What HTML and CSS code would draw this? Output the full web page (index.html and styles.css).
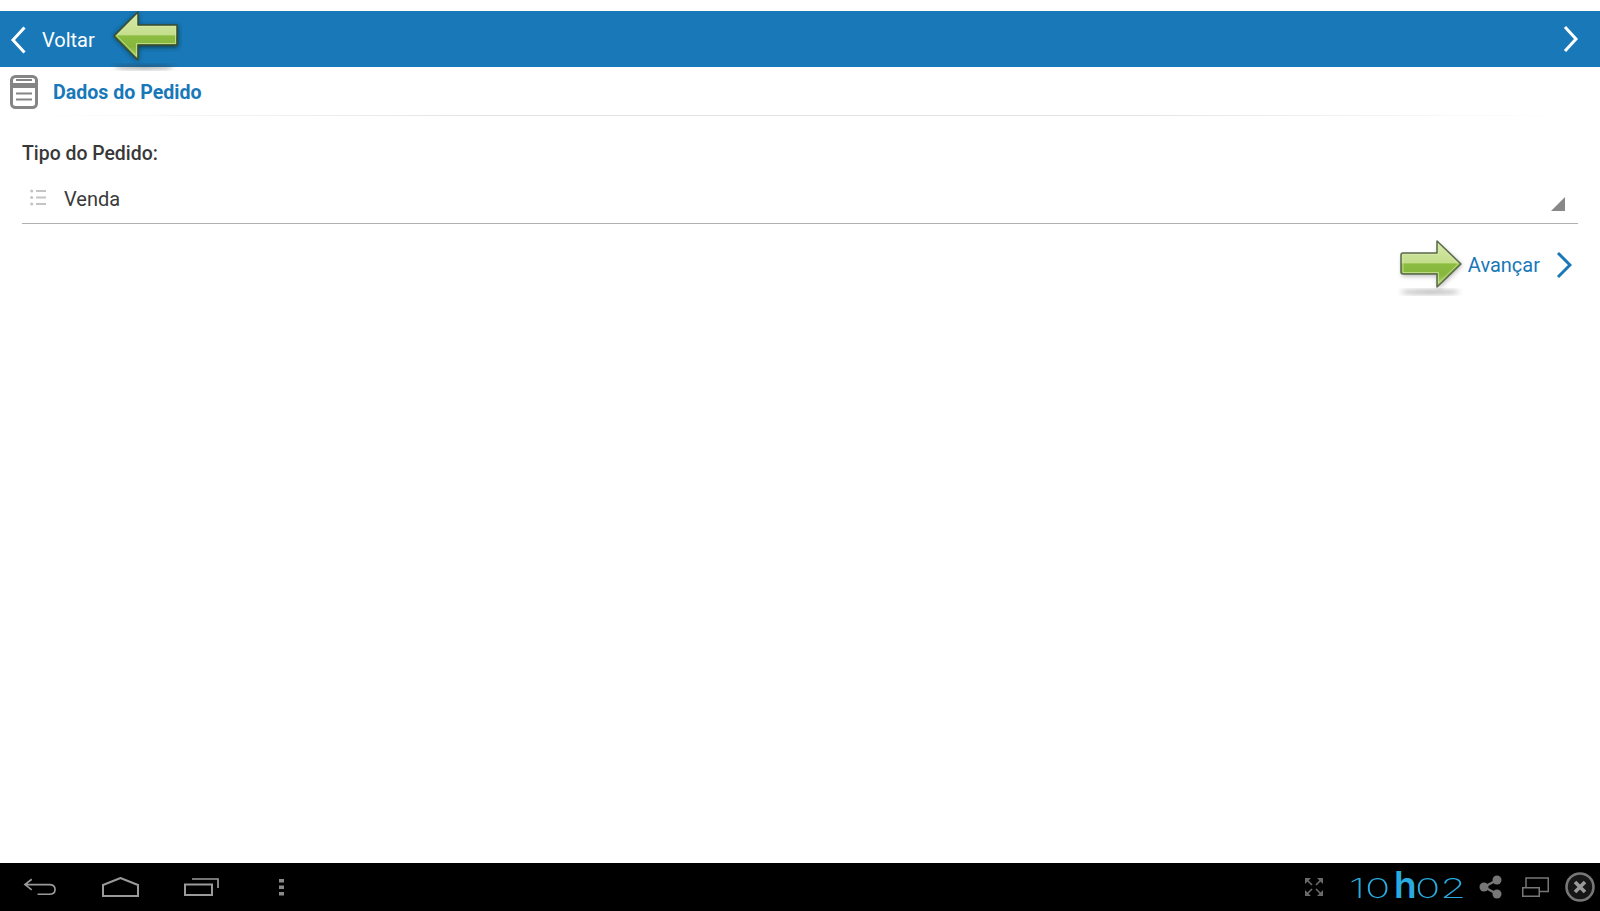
FILE: index.html
```html
<!DOCTYPE html>
<html lang="pt">

<head>
    <meta charset="UTF-8">
    <title>Dados do Pedido</title>
    <link rel="stylesheet" href="styles.css">
</head>

<body>

    <header class="topbar">
        <a class="topbar-back">
            <svg width="16" height="28" viewBox="0 0 16 28">
                <path d="M14.5 1.5 L3 14 L14.5 26.5" fill="none" stroke="#fff" stroke-width="3" />
            </svg>
            <span>Voltar</span>
        </a>
        <svg width="16" height="28" viewBox="0 0 16 28">
            <path d="M2 2 L13 14 L2 26" fill="none" stroke="#fff" stroke-width="3" />
        </svg>

        <!-- green arrow on top of the bar -->
        <svg class="hint hint-back" width="74" height="60" viewBox="0 0 74 60">
            <defs>
                <linearGradient id="green1" gradientUnits="userSpaceOnUse" x1="0" y1="1" x2="0" y2="49">
                    <stop offset="0" stop-color="#d8e9ab" />
                    <stop offset="0.47" stop-color="#c4de8c" />
                    <stop offset="0.5" stop-color="#8cbc40" />
                    <stop offset="0.72" stop-color="#86b63c" />
                    <stop offset="1" stop-color="#b4d474" />
                </linearGradient>
                <filter id="blur1" x="-30%" y="-30%" width="160%" height="160%">
                    <feGaussianBlur stdDeviation="2.5" />
                </filter>
            </defs>
            <ellipse cx="36" cy="56" rx="30" ry="2" fill="#333" opacity="0.5" filter="url(#blur1)" />
            <path d="M6 25 L30 2 L30 15 L70 15 L70 36 L30 36 L30 50 Z" fill="#0b2b28" opacity="0.8" filter="url(#blur1)" />
            <path d="M6 25 L30 1 L30 14 L69 14 L69 34 L30 34 L30 49 Z" fill="url(#green1)" stroke="#3c4d2c" stroke-width="1.5" stroke-linejoin="round" />
            <path d="M9 25 L28.5 5 L28.5 15.5 L67.5 15.5 L67.5 32.5 L28.5 32.5 L28.5 45 Z" fill="none" stroke="#d6e8a8" stroke-width="1" opacity="0.7" />
        </svg>
    </header>

    <div class="section-head">
        <svg width="28" height="34" viewBox="0 0 28 34">
            <rect x="1.5" y="1.5" width="25" height="31" rx="4" fill="#fff" stroke="#858585" stroke-width="3" />
            <rect x="3" y="8" width="22" height="5" fill="#858585" />
            <path d="M6 5 H22 M6 18.5 H22 M6 24.5 H22" stroke="#858585" stroke-width="2" />
        </svg>
        <h2>Dados do Pedido</h2>
    </div>

    <main class="content">
        <label class="field-label">Tipo do Pedido:</label>
        <div class="select">
            <svg class="list-icon" width="16" height="17" viewBox="0 0 16 17">
                <path d="M6 2 H16 M6 8.500 H16 M6 15 H16" stroke="#c4c4c4" stroke-width="2.2" />
                <circle cx="1.700" cy="2" r="1.600" fill="#c4c4c4" />
                <circle cx="1.700" cy="8.500" r="1.600" fill="#c4c4c4" />
                <circle cx="1.700" cy="15" r="1.600" fill="#c4c4c4" />
            </svg>
            <span class="select-value">Venda</span>
            <span class="select-arrow"></span>
        </div>
        <div class="actions">
            <a class="next">
                <span>Avançar</span>
                <svg width="16" height="28" viewBox="0 0 16 28">
                    <path d="M2 2 L14 14 L2 26" fill="none" stroke="#1878b8" stroke-width="3" />
                </svg>
                <svg class="hint hint-next" width="70" height="60" viewBox="0 0 70 60">
                    <defs>
                        <linearGradient id="green2" gradientUnits="userSpaceOnUse" x1="0" y1="2" x2="0" y2="48">
                            <stop offset="0" stop-color="#d8e9ab" />
                            <stop offset="0.47" stop-color="#c4de8c" />
                            <stop offset="0.5" stop-color="#8cbc40" />
                            <stop offset="0.72" stop-color="#86b63c" />
                            <stop offset="1" stop-color="#b4d474" />
                        </linearGradient>
                        <filter id="blur2" x="-30%" y="-30%" width="160%" height="160%">
                            <feGaussianBlur stdDeviation="2.5" />
                        </filter>
                    </defs>
                    <ellipse cx="32" cy="53" rx="30" ry="2" fill="#555" opacity="0.5" filter="url(#blur2)" />
                    <path d="M4 17 H40 V5 L64 26 L40 50 V37 H4 Z" fill="#555" opacity="0.45" filter="url(#blur2)" />
                    <path d="M3 16 Q3 14 5 14 H39 V2 L63 25 L39 48 V35 H5 Q3 35 3 33 Z" fill="url(#green2)" stroke="#5b6a4c" stroke-width="1.5" stroke-linejoin="round" />
                    <path d="M5 15.5 H40.5 V6 L60 25 L40.5 44 V33.5 H5 Z" fill="none" stroke="#d6e8a8" stroke-width="1" opacity="0.7" />
                </svg>
            </a>
        </div>
    </main>

    <footer class="navbar">
        <div class="nav-keys">
            <svg width="34" height="18" viewBox="0 0 35 18">
                <path d="M9 1 L2 6.5 L9 12 M2 6.5 H27 Q33 6.5 33 11.5 Q33 16.5 27 16.5 H15" fill="none" stroke="#9a9a9a" stroke-width="1.7" />
            </svg>
            <svg width="37" height="20" viewBox="0 0 37 20">
                <path d="M1 8 L18.5 1 L36 8 V19 H1 Z" fill="none" stroke="#9a9a9a" stroke-width="2" />
            </svg>
            <svg width="35" height="18" viewBox="0 0 35 18">
                <path d="M8 1 H34 V10" fill="none" stroke="#9a9a9a" stroke-width="1.7" />
                <rect x="1" y="6.5" width="27" height="10.5" fill="none" stroke="#9a9a9a" stroke-width="2" />
            </svg>
            <svg class="key-menu" width="5" height="17" viewBox="0 0 5 17">
                <rect width="5" height="3.5" y="0" fill="#8a8a8a" />
                <rect width="5" height="3.5" y="6.5" fill="#8a8a8a" />
                <rect width="5" height="3.5" y="13" fill="#8a8a8a" />
            </svg>
        </div>
        <div class="nav-status">
            <svg width="20" height="20" viewBox="0 0 20 20">
                <path d="M1 1 H7 L1 7 Z M19 1 H13 L19 7 Z M1 19 H7 L1 13 Z M19 19 H13 L19 13 Z" fill="#6a6a6a" />
                <path d="M3 3 L8 8 M17 3 L12 8 M3 17 L8 12 M17 17 L12 12" stroke="#6a6a6a" stroke-width="1.6" />
            </svg>
            <span class="clock"><span class="clock-digits">10</span><b>h</b><span class="clock-digits">02</span></span>
            <svg class="st-share" width="23" height="24" viewBox="0 0 23 24">
                <path d="M5 12 L18 5 M5 12 L18 19" stroke="#777" stroke-width="2.4" />
                <circle cx="5" cy="12" r="4.5" fill="#777" />
                <circle cx="18" cy="5" r="4.5" fill="#777" />
                <circle cx="18" cy="19" r="4.5" fill="#777" />
            </svg>
            <svg class="st-windows" width="27" height="20" viewBox="0 0 27 20">
                <path d="M4 10 V1 H26.25 V14.5 H17" fill="none" stroke="#777" stroke-width="1.5" />
                <rect x="0.75" y="10.75" width="16.5" height="8.5" fill="none" stroke="#777" stroke-width="1.5" />
            </svg>
            <svg class="st-close" width="30" height="30" viewBox="0 0 30 30">
                <circle cx="15" cy="15" r="13.5" fill="#161616" stroke="#777" stroke-width="2.6" />
                <path d="M10 10 L20 20 M20 10 L10 20" stroke="#999" stroke-width="3.6" />
            </svg>
        </div>
    </footer>

</body>

</html>
```

FILE: styles.css
```css
body {
    font-family: Roboto, "Liberation Sans", sans-serif;
    margin: 0;
    height: 911px;
    overflow: hidden;
    background-color: #fff;
    display: flex;
    flex-direction: column;
}

svg {
    display: block;
    flex: none;
}

.topbar {
    position: relative;
    margin-top: 11px;
    height: 56px;
    background-color: #1878b8;
    color: #fff;
    display: flex;
    align-items: center;
    justify-content: space-between;
    padding: 0 21px 0 10px;
}

.topbar-back {
    display: flex;
    align-items: center;
    gap: 16px;
    font-size: 20px;
    padding-top: 1px;
}

.hint {
    position: absolute;
}

.hint-back {
    left: 108px;
    top: 0;
}

.section-head {
    height: 49px;
    box-sizing: border-box;
    display: flex;
    align-items: center;
    gap: 15px;
    padding: 0 0 0 10px;
    background: linear-gradient(to right, #fff 2%, #e4e4e4 30%, #e4e4e4 70%, #fff 98%) left bottom / 100% 1px no-repeat;
}

.section-head h2 {
    margin: 2px 0 0;
    font-size: 19.6px;
    font-weight: 700;
    color: #1878b8;
}

.content {
    flex: 1;
    padding: 0 22px;
}

.field-label {
    display: block;
    margin-top: 26px;
    line-height: 24px;
    font-size: 19.4px;
    font-weight: 500;
    color: #383838;
}

.select {
    position: relative;
    height: 50px;
    margin-top: 8px;
    box-sizing: border-box;
    border-bottom: 1px solid #b0b0b0;
    display: flex;
    align-items: center;
    padding: 1px 0 0 8px;
    gap: 18px;
    font-size: 20px;
    color: #3a3a3a;
}

.list-icon {
    margin-bottom: 3px;
}

.select-arrow {
    position: absolute;
    right: 13px;
    bottom: 12px;
    width: 0;
    height: 0;
    border-left: 14px solid transparent;
    border-bottom: 14px solid #888;
}

.actions {
    display: flex;
    justify-content: flex-end;
    margin-top: 27px;
}

.next {
    position: relative;
    display: flex;
    align-items: center;
    gap: 16px;
    padding-right: 6px;
    font-size: 20px;
    color: #1878b8;
}

.hint-next {
    left: -70px;
    top: -12px;
}

.navbar {
    height: 48px;
    background-color: #000;
    display: flex;
    align-items: center;
    justify-content: space-between;
    padding: 0 5px 0 23px;
}

.nav-keys {
    display: flex;
    align-items: center;
    gap: 45px;
}

.key-menu {
    margin-left: 15px;
}

.nav-status {
    display: flex;
    align-items: center;
}

.clock {
    display: flex;
    align-items: baseline;
    margin-left: 25px;
    padding-bottom: 4px;
    font-family: Inter, "Noto Sans", sans-serif;
    color: #29abe2;
}

.clock-digits {
    display: inline-block;
    width: 45px;
    font-size: 27px;
    font-weight: 200;
    transform: scaleX(1.55);
    transform-origin: left center;
}

.clock b {
    width: 21px;
    font-size: 37px;
    font-weight: 600;
    line-height: 1;
}

.st-share {
    margin-left: 19px;
}

.st-windows {
    margin-left: 20px;
}

.st-close {
    margin-left: 16px;
}
```
